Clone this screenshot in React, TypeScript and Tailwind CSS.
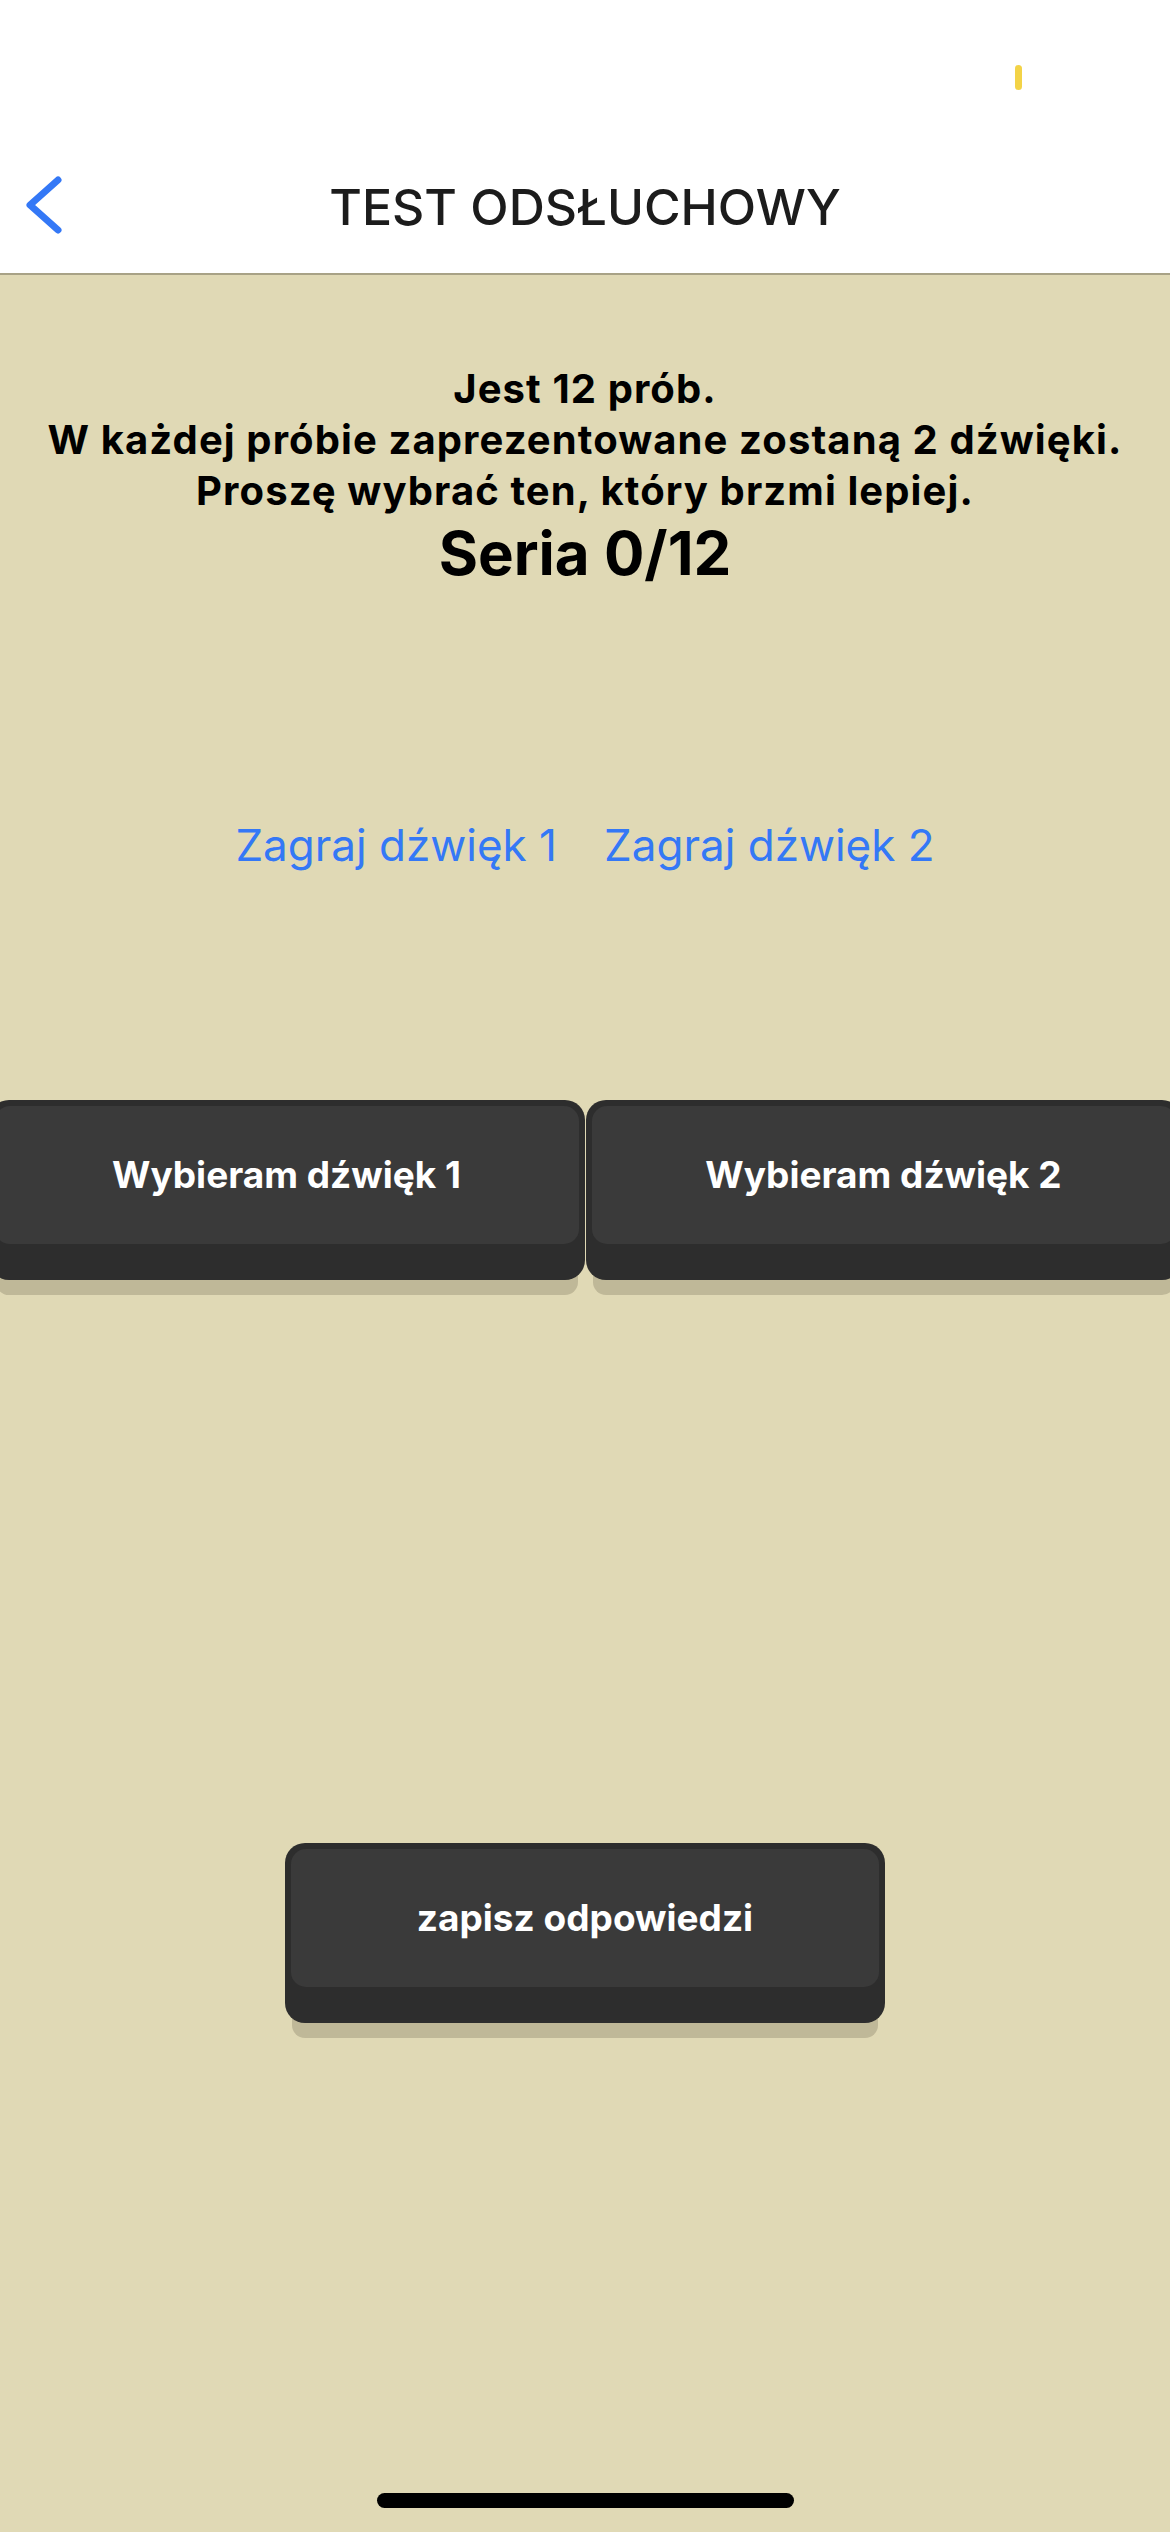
import React from "react";

function ChoiceButton({ label, width }: { label: string; width: string }) {
  return (
    <button
      className={`${width} shrink-0 rounded-[20px] bg-[#2d2d2d] p-[6px] pb-[36px] shadow-[0_22px_0_-7px_#bfb898]`}
    >
      <div className="flex h-[138px] items-center justify-center rounded-[15px] bg-[#3a3a3a]">
        <span className="text-[37px] font-bold text-white">{label}</span>
      </div>
    </button>
  );
}

export default function App() {
  return (
    <div
      className="relative min-h-[2532px] overflow-hidden bg-[#e0d9b5]"
      style={{ fontFamily: "Inter, 'Noto Sans', sans-serif" }}
    >
      {/* status bar + nav */}
      <header className="border-b-2 border-[#a8a286] bg-white">
        <div className="flex h-[141px] justify-end pr-[148px] pt-[65px]">
          <div className="h-[25px] w-[7px] rounded-full bg-[#f3d347]" />
        </div>
        <div className="grid h-[132px] grid-cols-[1fr_auto_1fr] items-center">
          <div className="pl-[24px]">
            <svg width="44" height="62" viewBox="0 0 44 62">
              <path
                d="M34 4 L6 29 L34 54"
                fill="none"
                stroke="#3478f6"
                strokeWidth="7"
                strokeLinecap="round"
                strokeLinejoin="round"
              />
            </svg>
          </div>
          <h1 className="text-[50px] font-medium leading-[1.2] text-[#1c1c1c]">TEST ODSŁUCHOWY</h1>
          <div />
        </div>
      </header>

      <main className="flex flex-col items-center">
        <div className="pt-[88px] text-center text-black">
          <p className="text-[40px] font-bold leading-[51px] tracking-[1.1px]">
            Jest 12 prób.
            <br />
            W każdej próbie zaprezentowane zostaną 2 dźwięki.
            <br />
            Proszę wybrać ten, który brzmi lepiej.
          </p>
          <p className="text-[60px] font-bold leading-[74px]">Seria 0/12</p>
        </div>

        <div className="mt-[229px] flex gap-[47px] text-[44px] leading-[1.2] text-[#3478f6]">
          <button>Zagraj dźwięk 1</button>
          <button>Zagraj dźwięk 2</button>
        </div>

        <div className="mt-[228px] flex w-full justify-center gap-[1px]">
          <ChoiceButton label="Wybieram dźwięk 1" width="w-[596px]" />
          <ChoiceButton label="Wybieram dźwięk 2" width="w-[596px]" />
        </div>

        <div className="mt-[563px]">
          <ChoiceButton label="zapisz odpowiedzi" width="w-[600px]" />
        </div>
      </main>

      {/* home indicator */}
      <div className="absolute bottom-[24px] left-[377px] h-[15px] w-[417px] rounded-full bg-black" />
    </div>
  );
}
